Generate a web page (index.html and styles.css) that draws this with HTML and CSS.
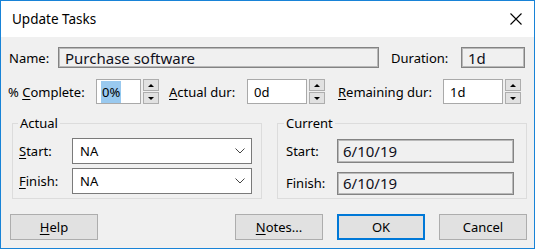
FILE: index.html
```html
<!DOCTYPE html>
<html>
<head>
  <meta charset="UTF-8">
  <title>Update Tasks</title>
  <link rel="stylesheet" href="styles.css">
</head>
<body>
  <div class="dialog">
    <div class="titlebar">
      <span class="title">Update Tasks</span>
      <svg class="close" width="12" height="12" viewBox="0 0 12 12">
        <path d="M0.5 0.5 L11.5 11.5 M11.5 0.5 L0.5 11.5" stroke="#000" stroke-width="1.1" fill="none"/>
      </svg>
    </div>

    <div class="content">
      <div class="row row-name">
        <span class="lbl lbl-name">Name:</span>
        <div class="field readonly name-field">Purchase software</div>
        <span class="lbl lbl-duration">Duration:</span>
        <div class="field readonly duration-field">1d</div>
      </div>

      <div class="row row-spin">
        <span class="lbl lbl-complete">% <u>C</u>omplete:</span>
        <div class="field spin-input pct-input"><span class="sel">0%</span></div>
        <div class="spinner"><span class="up"></span><span class="down"></span></div>

        <span class="lbl lbl-actual"><u>A</u>ctual dur:</span>
        <div class="field spin-input dur-input">0d</div>
        <div class="spinner"><span class="up"></span><span class="down"></span></div>

        <span class="lbl lbl-remaining"><u>R</u>emaining dur:</span>
        <div class="field spin-input dur-input">1d</div>
        <div class="spinner"><span class="up"></span><span class="down"></span></div>
      </div>

      <div class="groups">
        <fieldset class="group group-actual">
          <legend>Actual</legend>
          <div class="group-row">
            <span class="lbl glbl"><u>S</u>tart:</span>
            <div class="combo">NA
              <svg class="chevron" width="10" height="6" viewBox="0 0 10 6"><path d="M0.5 0.5 L5 5 L9.5 0.5" stroke="#444" stroke-width="1" fill="none"/></svg>
            </div>
          </div>
          <div class="group-row">
            <span class="lbl glbl"><u>F</u>inish:</span>
            <div class="combo">NA
              <svg class="chevron" width="10" height="6" viewBox="0 0 10 6"><path d="M0.5 0.5 L5 5 L9.5 0.5" stroke="#444" stroke-width="1" fill="none"/></svg>
            </div>
          </div>
        </fieldset>

        <fieldset class="group group-current">
          <legend>Current</legend>
          <div class="group-row">
            <span class="lbl glbl">Start:</span>
            <div class="field readonly date-field">6/10/19</div>
          </div>
          <div class="group-row">
            <span class="lbl glbl">Finish:</span>
            <div class="field readonly date-field">6/10/19</div>
          </div>
        </fieldset>
      </div>

      <div class="buttons">
        <button class="btn btn-help"><u>H</u>elp</button>
        <button class="btn btn-notes"><u>N</u>otes...</button>
        <button class="btn btn-ok">OK</button>
        <button class="btn">Cancel</button>
      </div>
    </div>
  </div>
</body>
</html>
```

FILE: styles.css
```css
* {
  box-sizing: border-box;
}

body {
  margin: 0;
  background-color: #ffffff;
  font-family: "Noto Sans", "Open Sans", sans-serif;
  font-size: 13px;
  color: #000000;
}

.dialog {
  width: 535px;
  height: 249px;
  border: 1px solid #1883d7;
  background-color: #f0f0f0;
}

.titlebar {
  height: 36px;
  background-color: #ffffff;
  display: flex;
  align-items: center;
  justify-content: space-between;
  padding: 0 12px 0 11px;
}

.title {
  font-size: 13.5px;
}

.content {
  padding: 0 7px 0 8px;
}

.row {
  display: flex;
  align-items: center;
}

.row-name {
  margin-top: 10px;
  height: 21px;
}

.row-spin {
  margin-top: 11px;
  height: 25px;
}

u {
  text-underline-offset: 2px;
}

.lbl {
  flex: none;
  white-space: nowrap;
}

.lbl-name { width: 49px; }
.lbl-duration { width: 70px; margin-left: 12px; }
.lbl-complete { width: 88px; margin-left: -1px; padding-right: 1px; }
.lbl-actual { width: 78px; margin-left: 10px; }
.lbl-remaining { width: 105px; margin-left: 13px; }

.field {
  flex: none;
  height: 100%;
  display: flex;
  align-items: center;
  padding-left: 6px;
  white-space: nowrap;
}

.readonly {
  background-color: #f0f0f0;
  border: 1px solid #838383;
  box-shadow: inset 0 0 0 1px #b9b9b9;
  font-size: 15px;
  color: #101020;
}

.name-field { width: 321px; }
.duration-field { width: 64px; }

.spin-input {
  background-color: #ffffff;
  border: 1px solid #a9a9a9;
  font-size: 13px;
}

.pct-input {
  width: 45px;
  padding-left: 4px;
}

.dur-input { width: 60px; }

.sel {
  background-color: #99c9ef;
  padding: 2px 1px;
}

.spinner {
  flex: none;
  width: 16px;
  height: 100%;
  margin-left: 2px;
  display: flex;
  flex-direction: column;
  gap: 1px;
}

.spinner span {
  flex: 1;
  background-color: #e1e1e1;
  border: 1px solid #adadad;
  display: flex;
  align-items: center;
  justify-content: center;
}

.spinner .up::after {
  content: "";
  border-left: 3px solid transparent;
  border-right: 3px solid transparent;
  border-bottom: 3px solid #000000;
}

.spinner .down::after {
  content: "";
  border-left: 3px solid transparent;
  border-right: 3px solid transparent;
  border-top: 3px solid #000000;
}

.groups {
  display: flex;
  gap: 15px;
  margin-top: 11px;
  margin-left: 3px;
}

.group {
  flex: none;
  margin: 0;
  width: 250px;
  height: 84px;
  border: 1px solid #dcdcdc;
  padding: 7px 0 0 6px;
  display: flex;
  flex-direction: column;
  gap: 4px;
}

.group legend {
  font-size: 13px;
  line-height: 16px;
  padding: 0 2px;
  margin-left: -1px;
}

.group-current {
  padding-left: 8px;
  gap: 6px;
}

.group-current legend {
  margin-left: -2px;
}

.group-row {
  display: flex;
  align-items: center;
  height: 26px;
}

.group-actual .glbl { width: 53px; }
.group-current .glbl { width: 51px; }

.combo {
  width: 180px;
  height: 26px;
  background-color: #ffffff;
  border: 1px solid #7a7a7a;
  display: flex;
  align-items: center;
  justify-content: space-between;
  padding: 0 6px 0 7px;
  font-size: 13px;
}

.date-field {
  width: 177px;
  height: 24px;
  padding-left: 5px;
}

.group-current .group-row:last-child .date-field {
  height: 23px;
}

.buttons {
  display: flex;
  gap: 14px;
  margin-top: 15px;
  margin-left: 1px;
}

.btn {
  width: 88px;
  height: 26px;
  background-color: #e1e1e1;
  border: 1px solid #adadad;
  font-family: "Noto Sans", "Open Sans", sans-serif;
  font-size: 13px;
  color: #000000;
  padding: 0;
}

.btn-help {
  margin-right: auto;
}

.btn-ok {
  border: 2px solid #0078d7;
}
```
